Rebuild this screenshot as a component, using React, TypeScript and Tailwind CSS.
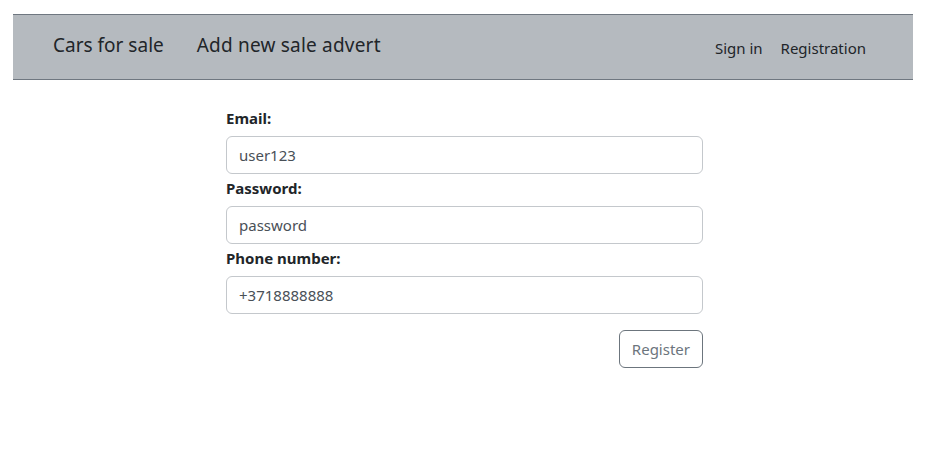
import React from 'react';

const font = { fontFamily: '"Noto Sans", "Open Sans", sans-serif' };

const Field: React.FC<{ label: string; value: string }> = ({ label, value }) => (
    <div className="flex flex-col">
        <label className="text-[15px] font-bold text-[#212529] leading-6 mb-[6px]">{label}</label>
        <input
            type="text"
            defaultValue={value}
            className="h-[38px] w-full rounded-[6px] border border-[#c4c8cc] bg-white px-3 text-[15px] text-[#495057] outline-none"
        />
    </div>
);

export default function App() {
    return (
        <div className="min-h-[453px] bg-white pt-[14px]" style={font}>
            {/* Navbar */}
            <nav className="mx-[13px] flex h-[66px] w-[900px] items-center justify-between border-y border-[#6f7780] bg-[#b5babf] pl-10 pr-[47px] text-[#212529]">
                <div className="flex items-center gap-[33px] pb-[3px] text-[19px]">
                    <span>Cars for sale</span>
                    <span className="tracking-[0.2px]">Add new sale advert</span>
                </div>
                <div className="flex items-center gap-[18px] pt-[2px] text-[15px]">
                    <span>Sign in</span>
                    <span>Registration</span>
                </div>
            </nav>

            {/* Form */}
            <div className="mx-auto mt-[26px] flex w-[477px] flex-col">
                <div className="flex flex-col gap-[2px]">
                    <Field label="Email:" value="user123" />
                    <Field label="Password:" value="password" />
                    <Field label="Phone number:" value="+3718888888" />
                </div>
                <div className="mt-4 flex justify-end">
                    <button className="h-[38px] rounded-[6px] border border-[#6c757d] px-3 text-[15px] text-[#6c757d]">
                        Register
                    </button>
                </div>
            </div>
        </div>
    );
}
